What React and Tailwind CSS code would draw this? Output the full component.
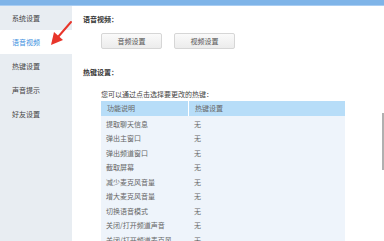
import React from 'react';

const menu = ['系统设置', '语音视频', '热键设置', '声音提示', '好友设置'];

const hotkeys = [
  '提取聊天信息',
  '弹出主窗口',
  '弹出频道窗口',
  '截取屏幕',
  '减少麦克风音量',
  '增大麦克风音量',
  '切换语音模式',
  '关闭/打开频道声音',
  '关闭/打开频道麦克风',
];

const App = () => {
  return (
    <div
      className="relative w-[384px] h-[241px] overflow-hidden bg-white text-[7px] leading-none"
      style={{ fontFamily: '"Noto Sans CJK SC", "Noto Sans", sans-serif' }}
    >
      {/* top bar */}
      <div className="h-[6px] bg-[#7fb4e8] border-b border-[#a9cdf2]" />

      <div className="flex h-[235px]">
        {/* sidebar */}
        <div className="w-[72px] bg-[#e8edf2] flex flex-col">
          {menu.map((item, i) => (
            <div
              key={item}
              className={`h-[24px] flex items-center pl-[12px] ${
                i === 1 ? 'bg-white text-[#3d8fe0]' : 'text-[#444]'
              }`}
            >
              {item}
            </div>
          ))}
        </div>

        {/* content */}
        <div className="flex-1 pl-[11px] pt-[10px]">
          <div className="font-bold text-[#333] h-[8px]">语音视频：</div>
          <div className="flex gap-[12px] ml-[18px] mt-[9px]">
            <button className="w-[61px] h-[16px] rounded-[2px] border border-[#d6d6d6] bg-gradient-to-b from-[#fafafa] to-[#ececec] text-[#555] text-[7px]">
              音频设置
            </button>
            <button className="w-[61px] h-[16px] rounded-[2px] border border-[#d6d6d6] bg-gradient-to-b from-[#fafafa] to-[#ececec] text-[#555] text-[7px]">
              视频设置
            </button>
          </div>

          <div className="font-bold text-[#333] mt-[20px] h-[8px]">热键设置：</div>

          <div className="ml-[18px] mt-[14px] text-[#444]">您可以通过点击选择要更改的热键：</div>

          <div className="ml-[18px] mt-[3px] w-[244px] text-[#666]">
            <div className="flex h-[15px] bg-[#b7ddf8] items-center">
              <div className="w-[88px] pl-[6px] border-r border-white h-full flex items-center">功能说明</div>
              <div className="pl-[6px]">热键设置</div>
            </div>
            <div className="bg-[#eef4fb] pt-[1px]">
              {hotkeys.map((k) => (
                <div key={k} className="flex h-[14.5px] items-center">
                  <div className="w-[88px] pl-[5px]">{k}</div>
                  <div className="pl-[5px]">无</div>
                </div>
              ))}
            </div>
          </div>
        </div>
      </div>

      {/* scrollbar thumb */}
      <div className="absolute left-[382px] top-[113px] w-[1.5px] h-[57px] bg-[#b0b0b0]" />

      {/* red arrow */}
      <svg className="absolute left-0 top-0" width="384" height="241">
        <line x1="71" y1="22" x2="58" y2="37" stroke="#e8352a" strokeWidth="2" strokeLinecap="round" />
        <polygon points="51,45 54,32 63,40" fill="#e8352a" />
      </svg>
    </div>
  );
};

export default App;
